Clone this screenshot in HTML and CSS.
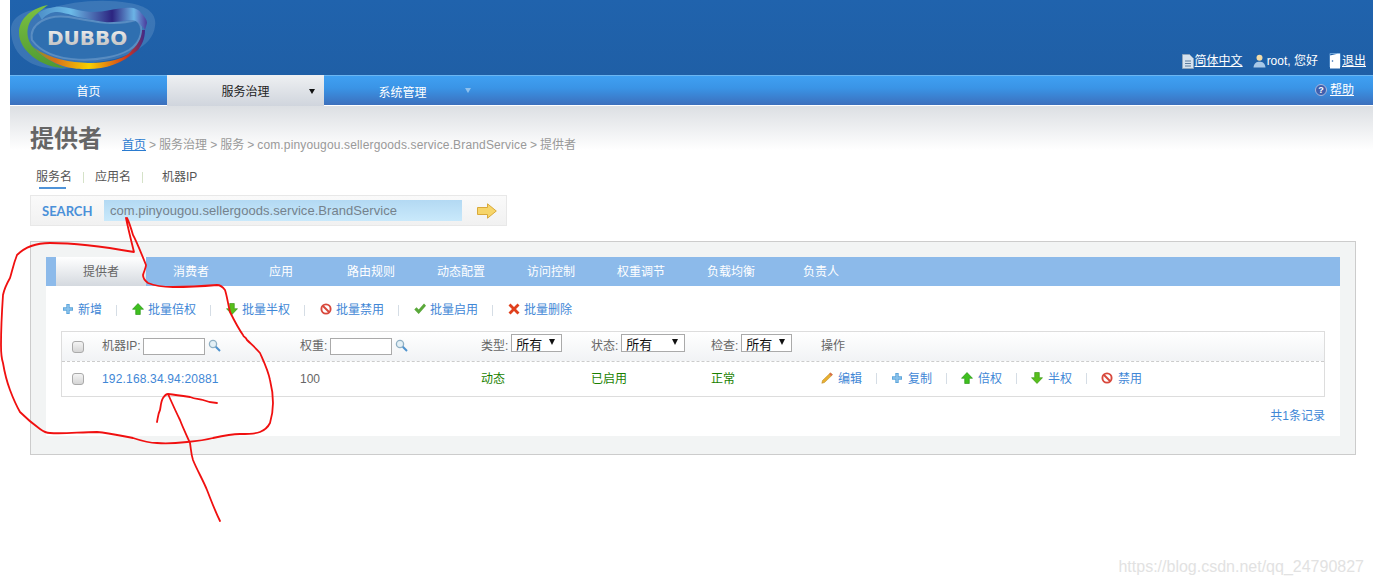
FILE: index.html
```html
<!DOCTYPE html>
<html lang="zh">
<head>
<meta charset="utf-8">
<title>提供者</title>
<link rel="stylesheet" href="styles.css">
</head>
<body>
<svg class="defs" width="0" height="0">
  <symbol id="i-plus" viewBox="0 0 12 12"><path d="M4.300 1h3.400v3.300H11v3.400H7.700V11H4.300V7.700H1V4.300h3.300z" fill="#5ea6dc"/><path d="M5.200 2h1.600v3.200H10v1.600H6.800V10H5.200V6.800H2V5.200h3.200z" fill="#8cc3ec"/></symbol>
  <symbol id="i-up" viewBox="0 0 12 12"><path d="M6 .5 11.500 6.300H8.300V11.500H3.700V6.300H.5z" fill="#3fbf1f" stroke="#1f8d0c" stroke-width=".6"/></symbol>
  <symbol id="i-down" viewBox="0 0 12 12"><path d="M6 11.500 11.500 5.700H8.300V.5H3.700V5.700H.5z" fill="#58bf1c" stroke="#2f8f0c" stroke-width=".6"/></symbol>
  <symbol id="i-ban" viewBox="0 0 12 12"><circle cx="6" cy="6" r="4.600" fill="#fff" stroke="#d8483c" stroke-width="1.900"/><path d="M3 3l6 6" stroke="#d8483c" stroke-width="1.900"/></symbol>
  <symbol id="i-check" viewBox="0 0 12 12"><path d="M.3 6.500 2.500 4.200 4.700 6.500 10 .5 12 2.700 4.700 11z" fill="#5aa83a"/></symbol>
  <symbol id="i-x" viewBox="0 0 12 12"><path d="M2.500 .5 6 4 9.500 .5 11.500 2.500 8 6 11.500 9.500 9.500 11.500 6 8 2.500 11.500.5 9.500 4 6 .5 2.500z" fill="#e0401c"/></symbol>
  <symbol id="i-pen" viewBox="0 0 12 12"><path d="M9.500 .8 11.500 2.800 3.500 10.500.8 11.300 1.500 8.500z" fill="#e8b030" stroke="#b58020" stroke-width=".5"/><path d="M9.500 .8 11.500 2.800 10.200 4 8.200 2z" fill="#d86a50"/></symbol>
  <symbol id="i-lens" viewBox="0 0 13 13"><circle cx="5" cy="5" r="3.600" fill="#e4f0f6" stroke="#8fb0c4" stroke-width="1.300"/><path d="M7.800 7.800 12 12" stroke="#4f93cf" stroke-width="2"/></symbol>
  <symbol id="i-doc" viewBox="0 0 12 15"><path d="M.5.500H7.500L11.500 4.500V14.500H.5z" fill="#d6e2ee" stroke="#8fa6bd"/><path d="M3 7h6M3 9.500h6M3 12h6" stroke="#5d7d9e"/></symbol>
  <symbol id="i-user" viewBox="0 0 13 14"><circle cx="6.500" cy="3.800" r="3" fill="#f2dca8"/><path d="M.5 13.500C1 9 3.500 7.800 6.500 7.800S12 9 12.500 13.500z" fill="#a8c8e8"/></symbol>
  <symbol id="i-door" viewBox="0 0 12 16"><path d="M1 .5H11V14H1z" fill="none" stroke="#6fa4d8"/><path d="M1 2.500 8.500 .8H11V15.500H1z" fill="#fff"/><circle cx="3.500" cy="8" r=".8" fill="#2c66ab"/></symbol>
</svg>

<header class="top">
  <svg class="logo" viewBox="0 0 146 72" width="146" height="72">
    <defs>
      <linearGradient id="ring" x1="0" y1="0" x2="1" y2="0">
        <stop offset="0" stop-color="#7a9a2a"/><stop offset=".2" stop-color="#d9701a"/><stop offset=".5" stop-color="#f6d000"/><stop offset=".85" stop-color="#d0321e"/><stop offset="1" stop-color="#3b2a8c"/>
      </linearGradient>
      <linearGradient id="ribbon" x1="0" y1="0" x2="1" y2="0">
        <stop offset="0" stop-color="#4d8fc8"/><stop offset=".3" stop-color="#6cbbe8"/><stop offset=".68" stop-color="#2c2480"/><stop offset=".88" stop-color="#6cb4e6"/><stop offset="1" stop-color="#4a3a9c"/>
      </linearGradient>
      <linearGradient id="word" x1="0" y1="0" x2="0" y2="1">
        <stop offset="0" stop-color="#f6f6f6"/><stop offset="1" stop-color="#b8b8b8"/>
      </linearGradient>
      <linearGradient id="leaf" x1="0" y1="0" x2="0" y2="1">
        <stop offset="0" stop-color="#7cc142"/><stop offset="1" stop-color="#4f9a32"/>
      </linearGradient>
    </defs>
    <path d="M0 30C0 14 20 8 40 8 60 2 90-2 118 3 138 6 146 15 144 26 142 48 110 60 85 62 65 70 35 72 18 62 5 55 0 42 0 30z" fill="#7aa6d2" opacity=".3"/>
    <path d="M21 40C18 24 36 14 58 17 85 22 105 26 125 20 134 26 131 42 118 50 95 63 40 66 21 40z" fill="#2f6fb0" stroke="#7ea8d2" stroke-opacity=".5" stroke-width="2"/>
    <path d="M37 5C18 9 8 20 8 33 8 50 30 68 54 68 40 62 28 54 22 47 14 38 14 22 27 13 30 10 34 7 37 5z" fill="url(#leaf)"/>
    <path d="M22 47C40 60 60 62 77 63 100 63 116 58 121 50 128 44 131 36 131 30L134 30C134 40 130 46 127 50 110 64 95 69 77 69 62 70 40 66 22 47z" fill="url(#ring)"/>
    <path d="M27 13C35 8 45 6 51 7 62 8 72 12 81 12 95 12 105 8 114 8 122 7 128 9 130 13 134 17 136 20 136 23L134 30C130 24 125 20 121 20 110 21 100 23 94 22 85 21 75 18 67 17 58 14 50 12 44 12 38 13 33 16 31 20z" fill="url(#ribbon)"/>
    <text x="36" y="45" class="logo-text" fill="url(#word)">DUBBO</text>
  </svg>
  <div class="userbar">
    <a class="link-light" href="#"><svg class="ico-doc"><use href="#i-doc"/></svg><u>简体中文</u></a>
    <span class="link-light"><svg class="ico-user"><use href="#i-user"/></svg>root, 您好</span>
    <a class="link-light logout" href="#"><svg class="ico-door"><use href="#i-door"/></svg><u>退出</u></a>
  </div>
</header>

<nav class="nav">
  <a class="nav-item" href="#">首页</a>
  <a class="nav-item active" href="#">服务治理<span class="caret dark"></span></a>
  <a class="nav-item low" href="#">系统管理<span class="caret pale"></span></a>
  <a class="help" href="#"><span class="help-ico">?</span><u>帮助</u></a>
</nav>

<main class="page">
  <div class="title-row">
    <h1>提供者</h1>
    <p class="crumbs"><a href="#">首页</a> &gt; 服务治理 &gt; 服务 &gt; <span class="pkg">com.pinyougou.sellergoods.service.BrandService</span> &gt; 提供者</p>
  </div>

  <div class="search-tabs">
    <span class="st on">服务名</span><i class="st-sep"></i>
    <span class="st">应用名</span><i class="st-sep"></i>
    <span class="st wide">机器IP</span>
  </div>

  <div class="search">
    <b>SEARCH</b>
    <div class="search-input">com.pinyougou.sellergoods.service.BrandService</div>
    <svg class="go" viewBox="0 0 20 16" width="20" height="16"><path d="M.5 4.500H10.500V.8L19.300 8 10.500 15.200V11.500H.5z" fill="#f6d56a" stroke="#d9a93a"/></svg>
  </div>

  <section class="panel">
    <div class="inner">
      <div class="tabs">
        <a class="tab active" href="#">提供者</a>
        <a class="tab" href="#">消费者</a>
        <a class="tab" href="#">应用</a>
        <a class="tab" href="#">路由规则</a>
        <a class="tab" href="#">动态配置</a>
        <a class="tab" href="#">访问控制</a>
        <a class="tab" href="#">权重调节</a>
        <a class="tab" href="#">负载均衡</a>
        <a class="tab" href="#">负责人</a>
      </div>

      <div class="actions toolbar">
        <a href="#"><svg class="ico12"><use href="#i-plus"/></svg>新增</a><i></i>
        <a href="#"><svg class="ico12"><use href="#i-up"/></svg>批量倍权</a><i></i>
        <a href="#"><svg class="ico12"><use href="#i-down"/></svg>批量半权</a><i></i>
        <a href="#"><svg class="ico12"><use href="#i-ban"/></svg>批量禁用</a><i></i>
        <a href="#"><svg class="ico12"><use href="#i-check"/></svg>批量启用</a><i></i>
        <a href="#"><svg class="ico12"><use href="#i-x"/></svg>批量删除</a>
      </div>

      <div class="table">
        <div class="row head">
          <span class="cb"></span>
          <span class="cell">机器IP:<span class="field"></span><svg class="lens"><use href="#i-lens"/></svg></span>
          <span class="cell">权重:<span class="field wider"></span><svg class="lens"><use href="#i-lens"/></svg></span>
          <span class="cell">类型:<span class="sel s51">所有<em></em></span></span>
          <span class="cell">状态:<span class="sel s64">所有<em></em></span></span>
          <span class="cell">检查:<span class="sel s51">所有<em></em></span></span>
          <span class="cell">操作</span>
        </div>
        <div class="row body">
          <span class="cb"></span>
          <a class="ip" href="#">192.168.34.94:20881</a>
          <span class="cell">100</span>
          <span class="ok">动态</span>
          <span class="ok">已启用</span>
          <span class="ok">正常</span>
          <div class="actions">
            <a href="#"><svg class="ico12"><use href="#i-pen"/></svg>编辑</a><i></i>
            <a href="#"><svg class="ico12"><use href="#i-plus"/></svg>复制</a><i></i>
            <a href="#"><svg class="ico12"><use href="#i-up"/></svg>倍权</a><i></i>
            <a href="#"><svg class="ico12"><use href="#i-down"/></svg>半权</a><i></i>
            <a href="#"><svg class="ico12"><use href="#i-ban"/></svg>禁用</a>
          </div>
        </div>
      </div>
      <div class="total">共1条记录</div>
    </div>
  </section>
</main>

<svg class="ink" viewBox="0 0 1373 586" width="1373" height="586">
  <path d="M126 218C128 228 130 236 134 252C100 246 70 243 50 243C35 243 25 247 17 255C13 265 12 272 10 278C6 285 4 290 3 295C2 310 1 330 1 345C1 355 2 360 3 363C5 375 7 382 10 390C13 398 16 405 20 412C26 418 33 424 40 429C44 432 47 433 50 433C65 434 80 432 97 432C110 433 122 436 133 438C142 441 150 443 157 443C168 444 178 443 187 442C197 441 205 440 213 438C222 436 231 434 240 434C248 434 255 434 260 432C265 430 268 427 270 423C272 416 273 410 273 403C273 395 272 388 270 380C268 370 264 362 260 353C256 348 251 344 247 340C245 336 244 338 243 335C238 328 234 320 230 312C228 304 227 296 225 290C222 286 220 285 217 285C205 286 190 287 173 287C163 287 155 286 148 283C144 280 143 278 143 275C144 271 146 268 146 265C142 255 136 240 133 235C131 228 129 222 127 218" fill="none" stroke="#f01010" stroke-width="1.800" stroke-linejoin="round" stroke-linecap="round"/>
  <path d="M157 422C158 417 158 414 160 410C161 405 161 401 163 398C165 395 166 394 168 394C176 395 183 396 190 397C195 399 199 399 203 400C208 402 212 403 217 403M168 394C172 403 176 412 180 420C183 428 187 436 190 443C191 449 191 454 193 460C197 470 203 480 207 490C211 500 215 511 220 521" fill="none" stroke="#f01010" stroke-width="1.800" stroke-linejoin="round" stroke-linecap="round"/>
</svg>
<div class="watermark">https://blog.csdn.net/qq_24790827</div>
</body>
</html>
```

FILE: styles.css
```css
* { box-sizing: border-box; }
html, body { margin: 0; height: 586px; overflow: hidden; }
body {
  position: relative;
  padding-left: 10px;
  background: #fff;
  color: #666;
  font: 12px/1.2 "Liberation Sans", "Noto Sans CJK SC", sans-serif;
}
a { color: inherit; text-decoration: none; }
.defs { position: absolute; }

.top {
  height: 75px;
  background: linear-gradient(#2063ad, #1f5fa6);
  display: flex;
  justify-content: space-between;
  align-items: flex-end;
}
.logo { align-self: flex-start; margin: 0 0 0 1px; }
.logo-text { font: 700 20px "DejaVu Sans", sans-serif; }
.userbar { display: flex; gap: 10px; padding: 0 7px 6px 0; color: #fff; }
.link-light { display: flex; align-items: center; gap: 1px; color: #fff; }
.logout { margin-left: 1px; }
.ico-doc { width: 12px; height: 15px; }
.ico-user { width: 13px; height: 14px; }
.ico-door { width: 12px; height: 16px; }
.ico12 { width: 12px; height: 12px; flex: none; margin-top: -2px; }

.nav {
  height: 31px;
  display: flex;
  align-items: stretch;
  background: linear-gradient(#3fa0f2 0, #3a94e6 40%, #3c70bd 96%, #fff 96%);
  color: #fff;
  border-top: 1px solid #6bb6f2;
}
.nav-item {
  position: relative;
  width: 157px;
  display: flex;
  align-items: center;
  justify-content: center;
  padding-top: 2px;
}
.nav-item.low { padding-top: 4px; }
.nav-item.active {
  margin-top: -1px;
  padding-top: 4px;
  background: linear-gradient(#eef0f2, #d0d5dd);
  color: #222;
}
.caret {
  position: absolute;
  right: 9px;
  top: 14px;
  border: 3.500px solid transparent;
  border-bottom: 0;
  border-top-width: 5px;
}
.caret.dark { border-top-color: #111; }
.caret.pale { border-top-color: #8fc1ee; right: 10px; top: 12px; }
.help {
  margin-left: auto;
  display: flex;
  align-items: center;
  gap: 3px;
  padding: 0 19px 2px 0;
}
.help-ico {
  width: 12px;
  height: 12px;
  border-radius: 50%;
  background: #3f5fae;
  border: 1px solid #a9b8de;
  font-size: 9px;
  font-weight: 700;
  line-height: 10px;
  text-align: center;
}

.page {
  height: 480px;
  background: linear-gradient(#dcdfe3 0, #fff 44px);
  padding: 0 17px 0 20px;
}
.title-row { height: 62px; display: flex; align-items: flex-start; }
h1 {
  margin: 19px 0 0;
  font-size: 24px;
  line-height: 28px;
  color: #666;
  font-weight: 700;
  width: 92px;
}
.crumbs { margin: 31px 0 0; color: #999; line-height: 16px; word-spacing: -.3px; }
.crumbs a { color: #2a7bd0; text-decoration: underline; }
.pkg { letter-spacing: .15px; }

.search-tabs { display: flex; align-items: flex-start; height: 27px; margin-left: 6px; color: #555; }
.st { width: 36px; line-height: 16px; position: relative; padding-top: 1px; }
.st.on::after {
  content: "";
  position: absolute;
  left: 3px;
  top: 19px;
  width: 27px;
  height: 2px;
  background: #4f93d8;
}
.st.wide { margin-left: 8px; width: 40px; }
.st-sep { width: 1px; height: 11px; background: #d5e2c8; margin: 4px 11px 0 11px; }

.search {
  width: 477px;
  height: 31px;
  background: linear-gradient(#fafafa, #f1f1f1);
  border: 1px solid #e8e8e8;
  display: flex;
  align-items: center;
  padding-left: 11px;
}
.search b { width: 62px; color: #4a90d9; font: 700 13px "Lato", sans-serif; }
.search-input {
  width: 358px;
  height: 21px;
  line-height: 21px;
  padding-left: 6px;
  background: linear-gradient(#b3d9f3, #c9e9fb);
  color: #75828c;
  font-size: 13px;
  letter-spacing: .05px;
}
.go { margin-left: 15px; }

.panel {
  margin-top: 15px;
  height: 214px;
  background: #f2f4f4;
  border: 1px solid #ccc;
  padding: 15px;
}
.inner { height: 179px; background: #fff; }
.tabs { height: 29px; background: #8cbaea; padding-left: 10px; display: flex; }
.tab { width: 90px; line-height: 31px; text-align: center; color: #fff; }
.tab.active { background: linear-gradient(#fff, #d4d9df); color: #666; }

.actions { display: flex; align-items: center; color: #3f87d6; }
.actions a { display: flex; align-items: center; gap: 5px; }
.actions i { width: 1px; height: 11px; background: #d5dde5; margin: 0 14px 0 14px; }
.toolbar { height: 45px; padding: 3px 0 0 16px; }
.toolbar a { gap: 4px; }
.toolbar i { margin-right: 15px; }

.table {
  margin: 0 15px;
  border: 1px solid #ddd;
  height: 66px;
}
.row {
  display: grid;
  grid-template-columns: 40px 198px 181px 110px 120px 110px 1fr;
  align-items: center;
}
.head { height: 30px; background: linear-gradient(#fff, #f1f3f5); border-bottom: 1px dashed #ccc; color: #666; }
.body { height: 34px; color: #666; }
.cb {
  width: 12px;
  height: 12px;
  margin-left: 10px;
  border: 1px solid #aaa;
  border-radius: 3px;
  background: linear-gradient(#f4f4f4, #d5d5d5);
}
.cell { display: flex; align-items: center; }
.field { width: 62px; height: 17px; margin-left: 2px; border: 1px solid #aaa; background: #fff; }
.field.wider { margin-left: 3px; }
.lens { width: 13px; height: 13px; margin: -3px 0 0 3px; }
.sel {
  position: relative;
  height: 18px;
  margin: -6px 0 0 3px;
  border: 1px solid #aaa;
  padding: 2px 0 0 4px;
  line-height: 16px;
  font-size: 13px;
  color: #111;
  background: #fff;
}
.s51 { width: 51px; }
.s64 { width: 64px; }
.sel em {
  position: absolute;
  right: 6px;
  top: 4px;
  border: 3.500px solid transparent;
  border-bottom: 0;
  border-top: 6px solid #111;
}
.ip { color: #3f87d6; letter-spacing: .17px; }
.ok { color: #1a7f00; }

.total { padding: 12px 15px 0 0; text-align: right; color: #3f87d6; }

.ink { position: absolute; left: 0; top: 0; pointer-events: none; }
.watermark {
  position: absolute;
  right: 9px;
  bottom: 9px;
  font-size: 16px;
  line-height: 20px;
  color: #e2e2e2;
}
```
